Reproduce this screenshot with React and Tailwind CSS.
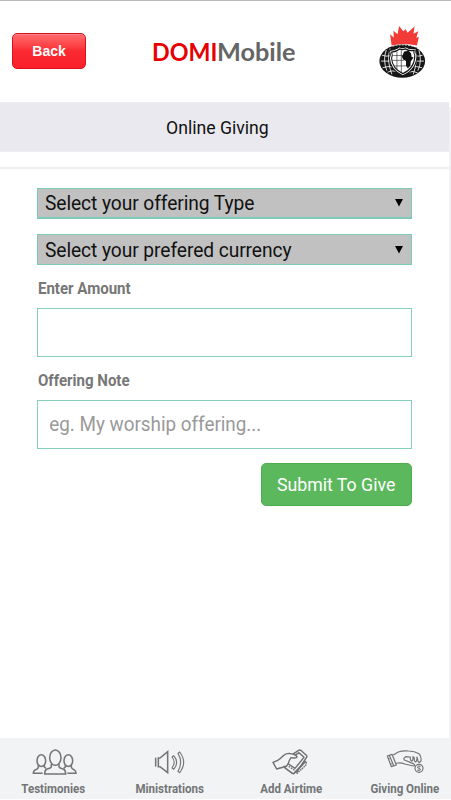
import React, { useState } from 'react';

const DomiLogo = () => (
  <svg viewBox="0 0 192 192" className="w-16 h-16 shrink-0" fill="none" aria-label="DOMI">
    <g transform="translate(15 -14) scale(0.94 1.107)">
      <path
        d="M53 82 L48 51 L60 60 L59 42 L72 51 L77 29 L90 43 L98 38 L104 47 L126 30 L123 50 L138 43 L132 61 L140 58 L134 82 Q94 73 53 82Z"
        fill="#f23b36"
      />
      <ellipse cx="87" cy="124" rx="73" ry="45" fill="#161616" />
      <g stroke="#fff" strokeWidth="2.4">
        <path d="M22 108 Q34 112 50 110 M19 124 H52 M24 142 Q40 137 60 140 M40 154 Q54 148 70 152" />
        <path d="M36 94 Q24 122 38 150 M48 90 Q36 122 54 160" />
        <path d="M152 108 Q140 112 126 110 M156 124 H124 M150 142 Q134 137 116 140 M136 156 Q122 149 108 154" />
        <path d="M140 94 Q151 122 137 150 M128 90 Q138 122 122 160" />
        <path d="M56 84 Q87 76 120 84" strokeDasharray="6 4" />
      </g>
      <path
        d="M45 95 Q69 92 78 85 Q87 90 98 85 Q110 93 132 89 Q127 99 134 106 Q135 146 89 164 Q48 148 46 116 Q52 106 45 95Z"
        fill="#fff"
        stroke="#161616"
        strokeWidth="3"
      />
      <path
        d="M53 100 Q71 97 79 91 Q87 95 97 91 Q109 98 125 95 Q122 102 127 108 Q128 142 89 158 Q55 144 53 117 Q58 108 53 100Z"
        fill="#fff"
        stroke="#161616"
        strokeWidth="3.5"
      />
      <path d="M58 109 H90 M56 122 H92 M62 137 H118 M70 98 V146 M84 94 V154" stroke="#333" strokeWidth="2" />
      <path
        d="M93 98 L107 96 L115 103 L117 113 L123 114 L114 125 L113 135 L105 144 L99 136 L99 124 L90 120 L86 112Z"
        fill="#111"
      />
    </g>
  </svg>
);

const PeopleIcon = () => (
  <svg viewBox="0 0 150 90" className="w-[50px] h-[30px]" fill="none" stroke="#747474" strokeWidth="4.6">
    <ellipse cx="79" cy="32" rx="17" ry="23" />
    <path d="M67 51 V59 Q65 64 54 66 Q47 69 47 81 H110 Q110 69 103 66 Q92 64 90 59 V51" />
    <ellipse cx="37" cy="41" rx="13" ry="17.5" />
    <path d="M28 54 V61 Q27 66 20 68 Q13 71 13 79 H41 M46 54 V60 L51 64" />
    <ellipse cx="118" cy="41" rx="13" ry="17.5" />
    <path d="M127 54 V61 Q129 66 135 68 Q141 71 141 79 H115 M109 54 V60 L104 64" />
  </svg>
);

const SpeakerIcon = () => (
  <svg viewBox="0 0 150 90" className="w-[50px] h-[30px]" fill="none" stroke="#747474" strokeWidth="4.6">
    <path d="M32 32 V59" strokeWidth="4.5" />
    <path d="M40 33 H45 L68 14 V77 L45 59 H40Z" />
    <path d="M81 30 Q94 45 81 63 L86 67 Q104 46 86 26Z" strokeWidth="3.4" />
    <path d="M99 19 Q115 45 99 73 L104 77 Q128 46 104 15Z" strokeWidth="3.4" />
  </svg>
);

const AirtimeIcon = () => (
  <svg viewBox="0 0 150 90" className="w-[50px] h-[30px]" fill="none" stroke="#6f6f6f" strokeWidth="4.2" strokeLinejoin="round">
    <path d="M75 25 L98 10 Q102 8 106 11 L121 25 Q124 28 121 32 L91 77" />
    <path d="M86 26 L99 17 L114 31 L87 64 L63 48 L71 37" />
    <path d="M63 48 L56 58 Q55 62 59 64 L79 79 Q83 81 86 77 L120 42" strokeWidth="5" />
    <path d="M21 46 L35 40 Q42 36 51 27 Q58 19 70 19 L83 22 Q92 25 93 30 Q91 34 83 33 L75 32 Q68 42 67 49 Q62 61 55 58 Q50 63 42 63 L32 66Z" fill="#f1f3f5" />
    <path d="M92 80 L119 55 L121 45" strokeDasharray="5 2" />
    <path d="M68 58 L86 70" strokeDasharray="5 3" />
  </svg>
);

const GivingIcon = () => (
  <svg viewBox="0 0 150 90" className="w-[50px] h-[30px]" fill="none" stroke="#747474" strokeWidth="3.6" strokeLinejoin="round">
    <path d="M22 27 L36 22 L49 54 L34 59Z M28 25 L41 56" />
    <path d="M27 33 V37 M34 49 V52" />
    <path d="M40 24 Q47 19 55 15 Q68 10 86 12 Q104 12 117 20 Q125 30 123 42 L118 47 Q113 45 113 37 L111 30 Q111 45 106 45 Q102 42 103 33 L99 29 Q100 43 94 42 Q90 38 91 30 L77 29 Q69 34 73 39 L98 49 Q108 55 101 57 L74 51 Q63 46 54 48 L49 49" />
    <circle cx="117" cy="64" r="12" />
    <path d="M122 59 Q114 55 112 60 Q112 64 117 64 Q123 65 121 69 Q117 73 111 69 M117 56 V72" strokeWidth="2.5" />
  </svg>
);

const tabs = [
  { label: 'Testimonies', icon: PeopleIcon, box: 'w-[107px]' },
  { label: 'Ministrations', icon: SpeakerIcon, box: 'w-[125px]' },
  { label: 'Add Airtime', icon: AirtimeIcon, box: 'w-[118px]' },
  { label: 'Giving Online', icon: GivingIcon, box: 'w-[109px] -mr-2' },
];

const offeringTypes = ['Select your offering Type'];
const currencies = ['Select your prefered currency'];

function SelectField({ options, className }) {
  const [value] = useState(options[0]);
  return (
    <button
      type="button"
      className={`flex w-full items-center justify-between border border-[#7ccbb7] bg-[#c1c1c1] pl-[7px] pr-[8px] text-[20px] leading-none text-[#111] ${className}`}
    >
      <span className="origin-left scale-x-[0.96] whitespace-nowrap tracking-[-0.08px]">{value}</span>
      <svg viewBox="0 0 8 8" className="h-2 w-2" fill="#000">
        <path d="M0 0H8L4 7.5Z" />
      </svg>
    </button>
  );
}

function TextField({ label, value, onChange, placeholder }) {
  return (
    <label className="mt-[14px] block">
      <span className="block origin-left scale-x-[0.94] pl-px text-[16px] leading-5 font-bold text-[#777]">{label}</span>
      <span className="mt-[9px] block h-[49px] border border-[#85d0bd]">
        <input
          value={value}
          onChange={(e) => onChange(e.target.value)}
          placeholder={placeholder}
          className="h-[46px] w-full origin-left scale-x-[0.942] px-[12px] text-[20px] outline-none placeholder:text-[#999]"
        />
      </span>
    </label>
  );
}

export default function App() {
  const [amount, setAmount] = useState('');
  const [note, setNote] = useState('');

  return (
    <main className="flex h-[800px] w-[451px] flex-col overflow-hidden bg-white font-['Roboto',sans-serif]">
      <header className="flex h-[102px] shrink-0 items-start justify-between border-t border-[#b9b9b9] pl-3 pr-[17px]">
        <button className="mt-8 h-9 w-[74px] rounded-[5px] border border-[#dc101c] bg-linear-to-b from-[#ff696e] via-[#fb2932] via-50% to-[#f92029] font-['Liberation_Sans',sans-serif] text-[14px] font-bold text-white shadow-[inset_0_1px_0_#ff8086]">
          Back
        </button>
        <h1 className="mt-[33px] -ml-2 flex w-[142px] text-[25px] leading-[34px] font-bold font-['Lato',sans-serif]">
          <span className="-ml-px w-[65px] origin-left scale-x-[0.93] text-[#e60000]">DOMI</span>
          <span className="origin-left scale-x-[1.01] text-[#656565]">Mobile</span>
        </h1>
        <div className="mt-[19px] w-16">
          <DomiLogo />
        </div>
      </header>

      <div className="flex min-h-0 flex-1">
        <section className="flex w-[449px] flex-col">
          <h2 className="h-[50px] border-y border-[#eeeef1] bg-[#eae9ef] pr-[14px] text-center text-[18px] leading-[50px] text-[#111]">
            <span className="inline-block scale-x-[0.98]">Online Giving</span>
          </h2>
          <hr className="mt-[15px] border-t-2 border-[#eee]" />

          <form className="mx-[37px] mt-[19px] flex w-[375px] flex-col" onSubmit={(e) => e.preventDefault()}>
            <SelectField options={offeringTypes} className="h-[31px] border-b-2" />
            <SelectField options={currencies} className="mt-[15px] h-[31px]" />

            <TextField label="Enter Amount" value={amount} onChange={setAmount} />
            <TextField
              label="Offering Note"
              value={note}
              onChange={setNote}
              placeholder="eg. My worship offering..."
            />

            <button className="mt-[14px] h-[43px] w-[151px] self-end rounded-[5px] border border-[#4cae4c] bg-[#5cb85c] text-[18px] text-white">
              <span className="inline-block scale-x-[0.985]">Submit To Give</span>
            </button>
          </form>
        </section>
        <div className="mt-[5px] w-0.5 bg-[#f2f2f4]" />
      </div>

      <footer className="mb-px flex h-[61px] shrink-0 bg-[#f1f3f5]">
        {tabs.map((tab) => {
          const Icon = tab.icon;
          return (
            <button key={tab.label} className={`flex shrink-0 flex-col items-center pt-[9px] ${tab.box}`}>
              <Icon />
              <span className="mt-1 scale-x-[0.96] text-[12px] leading-4 font-bold whitespace-nowrap text-[#737577]">
                {tab.label}
              </span>
            </button>
          );
        })}
      </footer>
    </main>
  );
}
